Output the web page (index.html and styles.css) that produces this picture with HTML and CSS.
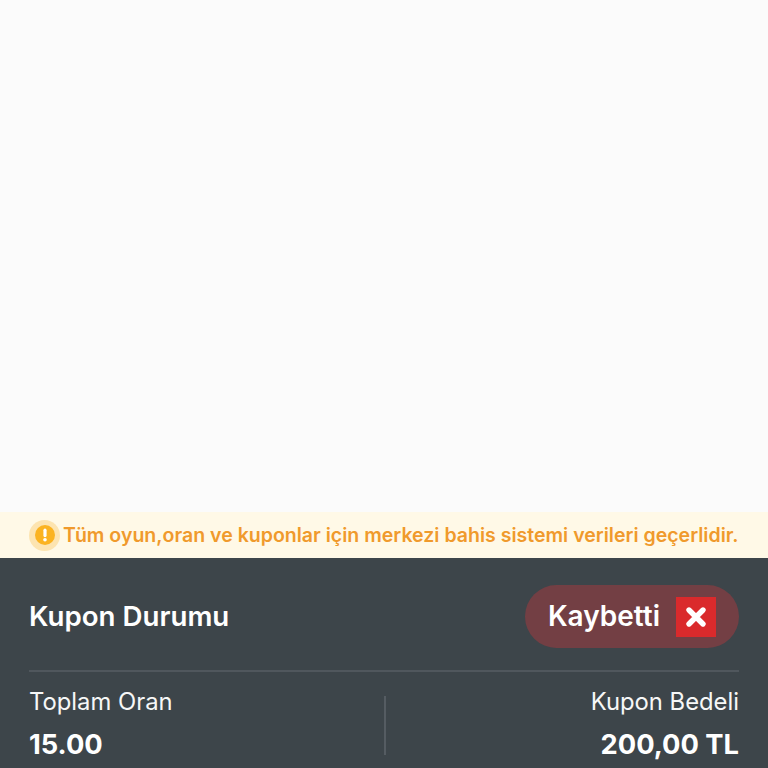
FILE: index.html
```html
<!DOCTYPE html>
<html lang="en">
<head>
    <meta charset="UTF-8">
    <meta name="viewport" content="width=device-width, initial-scale=1.0">
    <title>Kupon Detayı</title>
    <link rel="stylesheet" href="styles.css">
</head>
<body>
    <div class="content"></div>

    <!-- Warning Banner -->
    <div class="notice">
        <span class="notice-icon">
            <svg width="20" height="20" viewBox="0 0 20 20">
                <circle cx="10" cy="10" r="10" fill="#fbb321"/>
                <rect x="8.4" y="3.6" width="3.2" height="8.6" rx="1.6" fill="#fff"/>
                <circle cx="10" cy="14.8" r="1.8" fill="#fff"/>
            </svg>
        </span>
        <span>Tüm oyun,oran ve kuponlar için merkezi bahis sistemi verileri geçerlidir.</span>
    </div>

    <!-- Coupon Summary -->
    <div class="summary">
        <div class="status-row">
            <div class="status-title">Kupon Durumu</div>
            <div class="status-pill">
                <span class="status-text">Kaybetti</span>
                <span class="status-icon">
                    <svg width="22" height="22" viewBox="0 0 22 22">
                        <path d="M4 4L18 18M18 4L4 18" stroke="#fff" stroke-width="5.4" stroke-linecap="round"/>
                    </svg>
                </span>
            </div>
        </div>
        <div class="totals">
            <div class="total">
                <div class="total-label">Toplam Oran</div>
                <div class="total-value">15.00</div>
            </div>
            <div class="total-divider"></div>
            <div class="total total-right">
                <div class="total-label">Kupon Bedeli</div>
                <div class="total-value">200,00 TL</div>
            </div>
        </div>
    </div>
</body>
</html>
```

FILE: styles.css
```css
/* Global Styles */
body {
    font-family: Inter, "Noto Sans", sans-serif;
    margin: 0;
    height: 100vh;
    display: flex;
    flex-direction: column;
    overflow: hidden;
    background-color: #fbfbfb;
}

.content {
    flex: 1;
}

/* Warning Banner */
.notice {
    height: 46px;
    display: flex;
    align-items: center;
    gap: 3px;
    padding-left: 29px;
    background-color: #fff9e7;
    color: #f09a2c;
    font-size: 19.55px;
    font-weight: 600;
    white-space: nowrap;
}

.notice-icon {
    width: 31px;
    height: 31px;
    display: flex;
    align-items: center;
    justify-content: center;
    border-radius: 50%;
    background-color: #fde4b0;
}

/* Coupon Summary */
.summary {
    height: 210px;
    box-sizing: border-box;
    padding: 27px 29px 0 29px;
    background-color: #3d454a;
    color: #fff;
}

.status-row {
    height: 85px;
    display: flex;
    justify-content: space-between;
    border-bottom: 2px solid #50575d;
}

.status-title {
    height: 61px;
    display: flex;
    align-items: center;
    font-size: 27.7px;
    font-weight: 600;
}

.status-pill {
    height: 63px;
    box-sizing: border-box;
    display: flex;
    align-items: center;
    gap: 16px;
    padding: 0 23px;
    border-radius: 32px;
    background-color: #733f44;
    font-size: 28px;
    font-weight: 600;
}

.status-text {
    margin-bottom: 2px;
}

.status-icon {
    width: 40px;
    height: 40px;
    display: flex;
    align-items: center;
    justify-content: center;
    background-color: #da2a2c;
}

.totals {
    display: flex;
    justify-content: space-between;
    padding-top: 15px;
}

.total {
    width: 300px;
}

.total-right {
    text-align: right;
}

.total-label {
    font-size: 23.8px;
    line-height: 30px;
    color: #f6f7f7;
}

.total-value {
    margin-top: 11px;
    font-size: 27.3px;
    line-height: 34px;
    font-weight: 700;
}

.total-divider {
    width: 2px;
    height: 59px;
    margin-top: 9px;
    margin-left: 2px;
    background-color: #555c62;
}
```
